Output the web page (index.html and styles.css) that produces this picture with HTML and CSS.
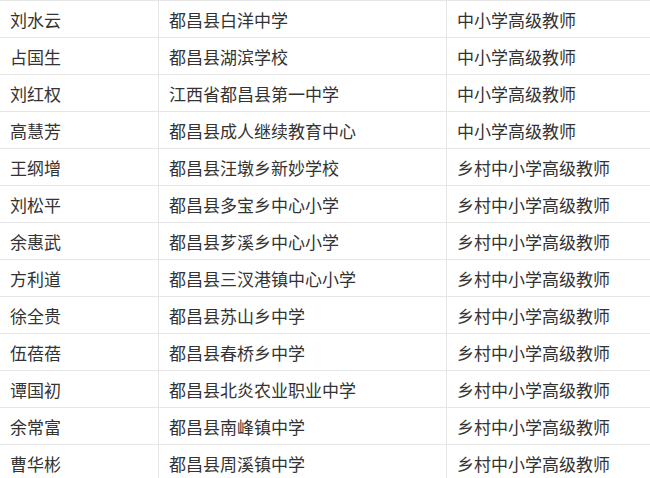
FILE: index.html
```html
<!DOCTYPE html>
<html lang="zh">
<head>
<meta charset="utf-8">
<link rel="stylesheet" href="styles.css">
</head>
<body>
<div class="table">
  <div class="row"><div class="cell c1">刘水云</div><div class="cell c2">都昌县白洋中学</div><div class="cell c3">中小学高级教师</div></div>
  <div class="row"><div class="cell c1">占国生</div><div class="cell c2">都昌县湖滨学校</div><div class="cell c3">中小学高级教师</div></div>
  <div class="row"><div class="cell c1">刘红权</div><div class="cell c2">江西省都昌县第一中学</div><div class="cell c3">中小学高级教师</div></div>
  <div class="row"><div class="cell c1">高慧芳</div><div class="cell c2">都昌县成人继续教育中心</div><div class="cell c3">中小学高级教师</div></div>
  <div class="row"><div class="cell c1">王纲增</div><div class="cell c2">都昌县汪墩乡新妙学校</div><div class="cell c3">乡村中小学高级教师</div></div>
  <div class="row"><div class="cell c1">刘松平</div><div class="cell c2">都昌县多宝乡中心小学</div><div class="cell c3">乡村中小学高级教师</div></div>
  <div class="row"><div class="cell c1">余惠武</div><div class="cell c2">都昌县芗溪乡中心小学</div><div class="cell c3">乡村中小学高级教师</div></div>
  <div class="row"><div class="cell c1">方利道</div><div class="cell c2">都昌县三汊港镇中心小学</div><div class="cell c3">乡村中小学高级教师</div></div>
  <div class="row"><div class="cell c1">徐全贵</div><div class="cell c2">都昌县苏山乡中学</div><div class="cell c3">乡村中小学高级教师</div></div>
  <div class="row"><div class="cell c1">伍蓓蓓</div><div class="cell c2">都昌县春桥乡中学</div><div class="cell c3">乡村中小学高级教师</div></div>
  <div class="row"><div class="cell c1">谭国初</div><div class="cell c2">都昌县北炎农业职业中学</div><div class="cell c3">乡村中小学高级教师</div></div>
  <div class="row"><div class="cell c1">余常富</div><div class="cell c2">都昌县南峰镇中学</div><div class="cell c3">乡村中小学高级教师</div></div>
  <div class="row"><div class="cell c1">曹华彬</div><div class="cell c2">都昌县周溪镇中学</div><div class="cell c3">乡村中小学高级教师</div></div>
</div>
</body>
</html>
```
FILE: styles.css
```css
html, body {
  margin: 0;
  padding: 0;
  background: #fff;
  overflow: hidden;
}
.table {
  width: 650px;
  font-family: "Noto Sans CJK SC", "Noto Sans", sans-serif;
  font-size: 17px;
  color: #333;
}
.row {
  display: grid;
  grid-template-columns: 159px 288px 1fr;
  height: 37px;
  border-top: 1px solid #e6e6e6;
  box-sizing: border-box;
}
.cell {
  display: flex;
  align-items: center;
  padding-left: 10px;
  white-space: nowrap;
  min-width: 0;
}
.c1, .c2 {
  border-right: 1px solid #e6e6e6;
}
```
